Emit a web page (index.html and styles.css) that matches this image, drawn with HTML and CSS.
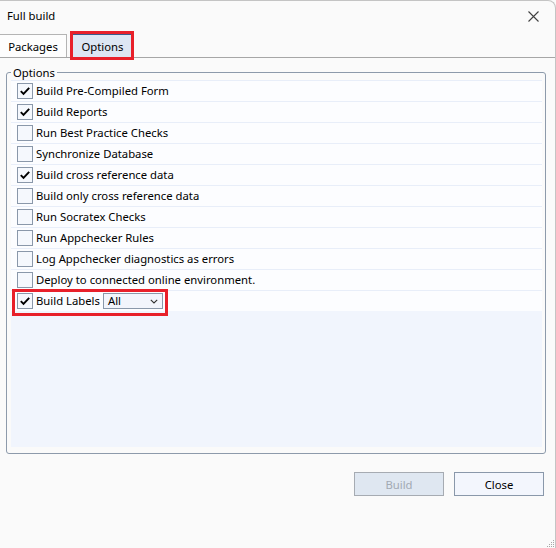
FILE: index.html
```html
<!DOCTYPE html>
<html>
<head>
<meta charset="utf-8">
<link rel="stylesheet" href="styles.css">
</head>
<body>
<div class="window">
  <div class="titlebar">
    <span class="title">Full build</span>
    <svg class="close-x" width="11" height="11" viewBox="0 0 11 11"><path d="M0.5 0.5 L10.5 10.5 M10.5 0.5 L0.5 10.5" stroke="#404040" stroke-width="1.1" fill="none"/></svg>
  </div>
  <div class="tabstrip">
    <div class="tab">Packages</div>
    <div class="tab active">Options<span class="hl"></span></div>
  </div>
  <fieldset class="group">
    <legend>Options</legend>
    <div class="list">
      <div class="row"><span class="cb on"><svg viewBox="0 0 16 16"><path d="M3.2 8.2 L6.3 11.3 L12.8 4.4" /></svg></span><span>Build Pre-Compiled Form</span></div>
      <div class="row"><span class="cb on"><svg viewBox="0 0 16 16"><path d="M3.2 8.2 L6.3 11.3 L12.8 4.4" /></svg></span><span>Build Reports</span></div>
      <div class="row"><span class="cb"></span><span>Run Best Practice Checks</span></div>
      <div class="row"><span class="cb"></span><span>Synchronize Database</span></div>
      <div class="row"><span class="cb on"><svg viewBox="0 0 16 16"><path d="M3.2 8.2 L6.3 11.3 L12.8 4.4" /></svg></span><span>Build cross reference data</span></div>
      <div class="row"><span class="cb"></span><span>Build only cross reference data</span></div>
      <div class="row"><span class="cb"></span><span>Run Socratex Checks</span></div>
      <div class="row"><span class="cb"></span><span>Run Appchecker Rules</span></div>
      <div class="row"><span class="cb"></span><span>Log Appchecker diagnostics as errors</span></div>
      <div class="row"><span class="cb"></span><span>Deploy to connected online environment.</span></div>
      <div class="row labels"><span class="cb on"><svg viewBox="0 0 16 16"><path d="M3.2 8.2 L6.3 11.3 L12.8 4.4" /></svg></span><span>Build Labels</span>
        <span class="select"><span>All</span><svg width="8" height="5" viewBox="0 0 8 5"><path d="M0.8 0.8 L4 4 L7.2 0.8" stroke="#303030" stroke-width="1.1" fill="none"/></svg></span>
        <span class="hl2"></span>
      </div>
    </div>
  </fieldset>
  <div class="footer">
    <button class="btn disabled">Build</button>
    <button class="btn">Close</button>
  </div>
  <svg class="grip" width="10" height="10" viewBox="0 0 10 10">
    <g fill="#a8a8a8">
      <rect x="8" y="2" width="1" height="1"/>
      <rect x="6" y="4" width="1" height="1"/><rect x="8" y="4" width="1" height="1"/>
      <rect x="4" y="6" width="1" height="1"/><rect x="6" y="6" width="1" height="1"/><rect x="8" y="6" width="1" height="1"/>
      <rect x="2" y="8" width="1" height="1"/><rect x="4" y="8" width="1" height="1"/><rect x="6" y="8" width="1" height="1"/><rect x="8" y="8" width="1" height="1"/>
    </g>
  </svg>
</div>
</body>
</html>
```

FILE: styles.css
```css
html, body {
  margin: 0;
  padding: 0;
  background: #fafafa;
}
body {
  width: 556px;
  height: 548px;
  overflow: hidden;
  font-family: "Noto Sans", "Open Sans", sans-serif;
  font-size: 11.3px;
  color: #000;
}
.window {
  position: relative;
  width: 556px;
  height: 548px;
  box-sizing: border-box;
  border-top: 1px solid #c4c4c4;
  border-right: 1px solid #c4c4c4;
  border-top-right-radius: 8px;
  background: #fafafa;
}
.titlebar {
  height: 32px;
  display: flex;
  align-items: center;
  justify-content: space-between;
  padding: 0 16px 0 7px;
  box-sizing: border-box;
}
.title {
  font-size: 11.3px;
  margin-top: -3px;
}
.close-x {
  display: block;
  margin-top: -2px;
}
.tabstrip {
  display: flex;
  align-items: flex-end;
  height: 25px;
  box-sizing: border-box;
  border-bottom: 1px solid #a6a6a6;
}
.tab {
  position: relative;
  height: 23px;
  box-sizing: border-box;
  display: flex;
  align-items: center;
  justify-content: center;
  font-size: 11.3px;
  border: 1px solid #b4b4b4;
  border-bottom: none;
  background: #fdfdfd;
}
.tab:first-child {
  width: 67px;
  border-left: none;
}
.tab.active {
  width: 61px;
  margin-left: 5px;
  background: #dde6f3;
  border-top: 1px solid #3b5b8c;
}
.hl {
  position: absolute;
  left: -3px;
  right: -2px;
  top: -4px;
  bottom: -3px;
  border: 3px solid #e8202a;
}
.group {
  margin: 7px 9px 0 6px;
  padding: 0 3px 4px 4px;
  border: 1px solid #8d9aab;
  border-radius: 3px;
  height: 389px;
  box-sizing: border-box;
}
.group legend {
  font-size: 11.3px;
  padding: 0 2px;
  margin-left: 0;
  line-height: 15px;
}
.list {
  background: #f1f5fd;
  height: 367px;
  margin-top: 0;
}
.row {
  position: relative;
  height: 21px;
  box-sizing: border-box;
  border-top: 1px solid #e8eef9;
  background: #fcfdff;
  display: flex;
  align-items: flex-start;
  padding-left: 6px;
  font-size: 11.3px;
  line-height: 19px;
}
.cb {
  width: 16px;
  height: 16px;
  box-sizing: border-box;
  border: 1px solid #8a98aa;
  background: #f5f8fd;
  margin-top: 2px;
  margin-right: 3px;
  flex: none;
}
.cb svg {
  display: block;
  width: 14px;
  height: 14px;
  fill: none;
  stroke: #000;
  stroke-width: 2.2;
}
.select {
  display: flex;
  align-items: center;
  justify-content: space-between;
  width: 60px;
  height: 16px;
  box-sizing: border-box;
  border: 1px solid #8a98aa;
  background: #f2f5fc;
  margin: 2px 0 0 3px;
  padding: 0 4px 0 4px;
  line-height: 14px;
}
.hl2 {
  position: absolute;
  left: 1px;
  top: -2px;
  width: 156px;
  height: 27px;
  box-sizing: border-box;
  border: 3px solid #e8202a;
}
.footer {
  display: flex;
  justify-content: flex-end;
  gap: 10px;
  padding: 18px 11px 0 0;
}
.btn {
  width: 90px;
  height: 24px;
  box-sizing: border-box;
  font-family: "Noto Sans", "Open Sans", sans-serif;
  font-size: 11.3px;
  border: 1px solid #8a98aa;
  background: #f3f6fd;
  color: #000;
  padding: 0;
}
.btn.disabled {
  background: #dfe7f1;
  border-color: #a6abb2;
  color: #a2a9b3;
}
.grip {
  position: absolute;
  right: 0;
  bottom: 0;
}
```
